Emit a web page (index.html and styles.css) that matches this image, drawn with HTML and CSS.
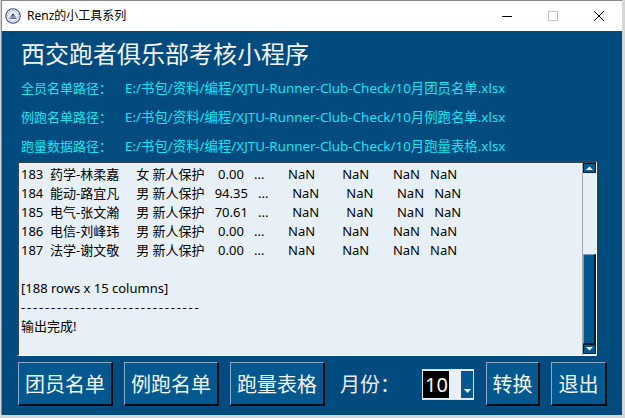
FILE: index.html
```html
<!DOCTYPE html>
<html lang="zh-CN">
<head>
<meta charset="utf-8">
<title>Renz的小工具系列</title>
<link rel="stylesheet" href="styles.css">
</head>
<body>
<div class="window">
  <div class="titlebar">
    <svg class="app-icon" viewBox="0 0 16 16" aria-hidden="true">
      <circle cx="8" cy="8" r="7.2" fill="#f2f3f8" stroke="#3c4c86" stroke-width="1.1"/>
      <circle cx="8" cy="8" r="5.3" fill="none" stroke="#7c88b0" stroke-width="0.9" stroke-dasharray="1 0.8"/>
      <path d="M4.6 10.2h6.8M5.6 9.2l2.4-3.4 2.4 3.4M8 5.8v4.4" fill="none" stroke="#2b3a78" stroke-width="1"/>
    </svg>
    <span class="title">Renz的小工具系列</span>
    <div class="controls">
      <span class="ctl"><svg viewBox="0 0 10 10" class="ctl-icon"><path d="M0 5.5h10" stroke="#000" stroke-width="1"/></svg></span>
      <span class="ctl"><svg viewBox="0 0 10 10" class="ctl-icon"><rect x="0.5" y="0.5" width="9" height="9" fill="none" stroke="#c4c4c4" stroke-width="1"/></svg></span>
      <span class="ctl"><svg viewBox="0 0 10 10" class="ctl-icon"><path d="M0 0L10 10M10 0L0 10" stroke="#000" stroke-width="1"/></svg></span>
    </div>
  </div>
  <div class="client">
    <h1 class="heading">西交跑者俱乐部考核小程序</h1>
    <div class="path-row"><span class="path-label">全员名单路径：</span><span class="path-value">E:/书包/资料/编程/XJTU-Runner-Club-Check/10月团员名单.xlsx</span></div>
    <div class="path-row"><span class="path-label">例跑名单路径：</span><span class="path-value">E:/书包/资料/编程/XJTU-Runner-Club-Check/10月例跑名单.xlsx</span></div>
    <div class="path-row"><span class="path-label">跑量数据路径：</span><span class="path-value">E:/书包/资料/编程/XJTU-Runner-Club-Check/10月跑量表格.xlsx</span></div>
    <div class="output">
<pre class="output-text">183  药学-林柔嘉     女 新人保护    0.00   ...       NaN        NaN       NaN   NaN
184  能动-路宜凡     男 新人保护   94.35   ...       NaN        NaN       NaN   NaN
185  电气-张文瀚     男 新人保护   70.61   ...       NaN        NaN       NaN   NaN
186  电信-刘峰玮     男 新人保护    0.00   ...       NaN        NaN       NaN   NaN
187  法学-谢文敬     男 新人保护    0.00   ...       NaN        NaN       NaN   NaN

[188 rows x 15 columns]
<span class="dashes">------------------------------</span>
输出完成!</pre>
      <div class="scrollbar">
        <div class="sb-btn"><svg viewBox="0 0 9 5" class="sb-arrow"><path d="M0 5L4.5 0.5 9 5z" fill="#fff"/></svg></div>
        <div class="sb-space"></div>
        <div class="sb-thumb"></div>
        <div class="sb-btn"><svg viewBox="0 0 9 5" class="sb-arrow"><path d="M0 0L4.5 4.5 9 0z" fill="#fff"/></svg></div>
      </div>
    </div>
    <div class="actions">
      <button class="btn btn-wide">团员名单</button>
      <button class="btn btn-wide">例跑名单</button>
      <button class="btn btn-wide">跑量表格</button>
      <span class="month-label">月份：</span>
      <div class="spin">
        <span class="spin-sel">10</span>
        <span class="spin-rest"></span>
        <span class="spin-arrow"><svg viewBox="0 0 7 4" class="spin-tri"><path d="M0 0L3.5 4 7 0z" fill="#fff"/></svg></span>
      </div>
      <button class="btn btn-convert">转换</button>
      <button class="btn btn-exit">退出</button>
    </div>
  </div>
</div>
</body>
</html>
```

FILE: styles.css
```css
* {
  box-sizing: border-box;
  margin: 0;
  padding: 0;
}

html, body {
  width: 625px;
  height: 418px;
  overflow: hidden;
}

body {
  background: #d6d6d6;
  font-family: "Noto Sans", "Noto Sans CJK SC", sans-serif;
}

.window {
  width: 621px;
  height: 415px;
  margin-left: 1px;
  border-left: 1px solid #8a8a8a;
  border-top: 1px solid #8a8a8a;
  display: flex;
  flex-direction: column;
  background: #fff;
}

.titlebar {
  height: 30px;
  display: flex;
  align-items: center;
  background: #fff;
}

.app-icon {
  width: 16px;
  height: 16px;
  margin-left: 3px;
}

.title {
  margin-left: 6px;
  font-size: 12px;
  color: #000;
  line-height: 16px;
}

.controls {
  margin-left: auto;
  display: flex;
  height: 100%;
}

.ctl {
  width: 46px;
  height: 100%;
  display: flex;
  align-items: center;
  justify-content: center;
}

.ctl-icon {
  width: 10px;
  height: 10px;
}

.client {
  flex: 1;
  background: #024b7f;
  padding: 5px 0 0 15px;
  display: flex;
  flex-direction: column;
}

.heading {
  font-family: "Noto Sans CJK SC", sans-serif;
  font-weight: normal;
  font-size: 24px;
  line-height: 34px;
  height: 34px;
  color: #f4f6f8;
  margin-left: 4px;
  margin-bottom: 4px;
}

.path-row {
  height: 29px;
  line-height: 29px;
  display: flex;
  font-size: 13px;
  color: #16e4f0;
  margin-left: 4px;
  white-space: nowrap;
}

.path-label {
  width: 104px;
  flex: none;
}

.path-value {
  font-size: 13.4px;
}

.output {
  width: 580px;
  height: 195px;
  display: flex;
  background: #e8f0f7;
  border-style: solid;
  border-width: 2px 1px 1px 2px;
  border-color: #3a4048 #ffffff #ffffff #3a4048;
}

.output-text {
  flex: 1;
  padding: 2px 0 0 2px;
  font-family: "Noto Sans", "Noto Sans CJK SC", sans-serif;
  font-size: 13px;
  line-height: 19px;
  color: #000;
  white-space: pre;
  overflow: hidden;
}

.dashes {
  letter-spacing: 1.8px;
}

.scrollbar {
  width: 14px;
  flex: none;
  display: flex;
  flex-direction: column;
  border-left: 1px solid #a3a9ae;
  padding-bottom: 1px;
}

.sb-btn {
  height: 10px;
  background: #02588f;
  border: 1px solid #0b1b28;
  display: flex;
  align-items: center;
  justify-content: center;
}

.sb-arrow {
  width: 7px;
  height: 4px;
}

.sb-space {
  height: 81px;
}

.sb-thumb {
  flex: 1;
  background: #02588f;
  border-style: solid;
  border-width: 1px 2px 1px 1px;
  border-color: #6f9cc0 #0a1822 #0a1822 #6f9cc0;
}

.actions {
  margin-top: 6px;
  height: 44px;
  display: flex;
  align-items: center;
}

.btn {
  height: 44px;
  background: #02588f;
  color: #f2f6fa;
  font-family: "Noto Sans CJK SC", sans-serif;
  font-size: 20px;
  line-height: 1;
  border-style: solid;
  border-width: 1px 2px 2px 1px;
  border-color: #86aacb #050a0e #050a0e #86aacb;
  display: flex;
  align-items: center;
  justify-content: center;
  flex: none;
}

.btn-wide {
  width: 95px;
  margin-right: 11px;
}

.btn-wide:first-child {
  margin-left: 1px;
}

.month-label {
  margin-left: 4px;
  width: 82px;
  font-family: "Noto Sans CJK SC", sans-serif;
  font-size: 20px;
  color: #e8eef4;
  line-height: 44px;
}

.spin {
  width: 52px;
  height: 31px;
  border: 1px solid #dde5ec;
  background: #e8f0f7;
  display: flex;
  padding: 1px 0;
}

.spin-sel {
  width: 26px;
  background: #000;
  color: #fff;
  font-size: 20px;
  line-height: 28px;
  padding-left: 2px;
  overflow: hidden;
}

.spin-rest {
  flex: 1;
}

.spin-arrow {
  width: 12px;
  background: #02588f;
  display: flex;
  align-items: flex-end;
  justify-content: center;
  padding-bottom: 5px;
}

.spin-tri {
  width: 7px;
  height: 4px;
}

.btn-convert {
  width: 54px;
  margin-left: 12px;
}

.btn-exit {
  width: 56px;
  margin-left: 11px;
}
```
